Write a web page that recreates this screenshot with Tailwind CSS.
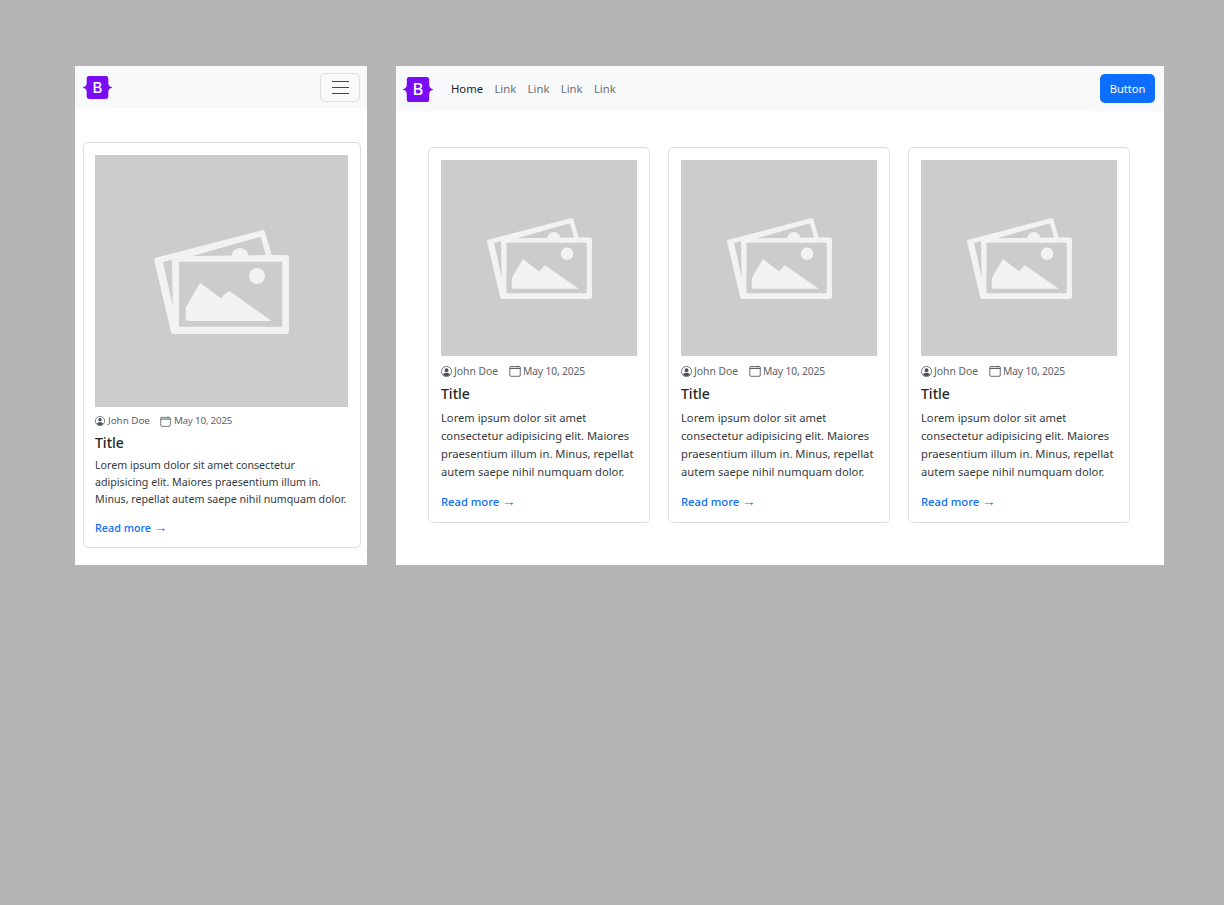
<!DOCTYPE html>
<html lang="en">
<head>
  <meta charset="UTF-8" />
  <title>Blog cards</title>
  <script src="https://cdn.jsdelivr.net/npm/@tailwindcss/browser@4"></script>
</head>
<body class="bg-[#b5b5b5] font-['Noto_Sans',sans-serif] text-[#212529]">
  <svg class="hidden">
    <symbol id="logo" viewBox="0 0 30 24" preserveAspectRatio="none">
      <path fill="#7a0cf5" d="M3.800 2.500A2.500 2.500 0 0 1 6.300 0h17.400a2.500 2.500 0 0 1 2.500 2.500V7.500c0 1.800 1 3.200 2.400 3.700.7.200 1.400.400 1.400.8s-.7.600-1.400.8c-1.400.5-2.400 1.900-2.400 3.700v5a2.500 2.500 0 0 1-2.500 2.500H6.300a2.500 2.500 0 0 1-2.500-2.500v-5c0-1.800-1-3.200-2.400-3.700C.7 12.600 0 12.400 0 12s.7-.6 1.400-.8c1.400-.5 2.400-1.900 2.400-3.700z"/>
    </symbol>
    <symbol id="pics" viewBox="0 0 135 104">
      <path fill="#f2f2f2" d="M1.800 27.800 108 .3c1.500-.4 2.500.2 3 1.700l6.700 23H132c2 0 3 1 3 3v73c0 2-1 3-3 3H20c-1.500 0-2.500-.7-3-2.200L.2 30.500c-.3-1.300.3-2.300 1.600-2.700z"/>
      <path fill="#cccccc" d="M9 32 18 29.700 18.800 76z M38.300 26 106.700 6.700 111.700 25z"/>
      <circle fill="#f2f2f2" cx="86" cy="26.500" r="8.500"/>
      <rect fill="#cccccc" x="25" y="31.700" width="103.300" height="65" rx="1"/>
      <circle fill="#f2f2f2" cx="103" cy="46" r="8"/>
      <path fill="#f2f2f2" d="M31.700 79c0-1.200.3-2 1-3.200L45 54.500c.6-1.200 1.500-1.400 2.700-.5L66.700 68.300 73.500 61.800c.8-.8 1.700-.9 2.700-.2L117.700 91H35c-2.200 0-3.300-1.100-3.300-3.300z"/>
    </symbol>
    <symbol id="user" viewBox="0 0 16 16">
      <circle cx="8" cy="8" r="7.400" fill="none" stroke="#495057" stroke-width="1.100"/>
      <circle cx="8" cy="6" r="2.800" fill="#495057"/>
      <path fill="#495057" d="M3 12.300C4 10.500 6 9.800 8 9.800s4 .7 5 2.500A6.500 6.500 0 0 1 8 15a6.500 6.500 0 0 1-5-2.700z"/>
    </symbol>
    <symbol id="cal" viewBox="0 0 16 16">
      <rect x="1" y="2" width="14" height="13" rx="1.500" fill="none" stroke="#495057" stroke-width="1.100"/>
      <path stroke="#495057" stroke-width="1.400" d="M1 4.500h14"/>
      <path stroke="#495057" stroke-width="1.100" d="M11.500 1v2"/>
    </symbol>
  </svg>

  <div class="flex items-start pt-[66px] pl-[75px] gap-[29px]">

    <!-- mobile -->
    <div class="w-[292px] h-[499px] bg-white shrink-0">
      <nav class="h-[42px] bg-[#f8f9fa] flex items-center justify-between pl-2 pr-[7px]">
        <span class="relative block w-[29px] h-[23px]">
          <svg class="w-[29px] h-[23px]"><use href="#logo"/></svg>
          <span class="absolute inset-0 flex items-center justify-center text-white text-[15px] leading-none font-medium font-['Inter',sans-serif]">B</span>
        </span>
        <button class="w-[40px] h-[29px] rounded-[5px] border border-[#dddfe1] flex flex-col items-center justify-center gap-[5px]">
          <span class="block w-[17px] h-px bg-[#40464c]"></span>
          <span class="block w-[17px] h-px bg-[#40464c]"></span>
          <span class="block w-[17px] h-px bg-[#40464c]"></span>
        </button>
      </nav>
      <div class="pt-[34px] pl-2 pr-[6px]">
        <article class="h-[406px] border border-[#dcdee0] rounded-[5px] px-[11px] pt-3">
          <div class="h-[252px] w-[253px] bg-[#cccccc] flex items-center justify-center">
            <svg class="w-[135px] h-[104px] mt-[2px]"><use href="#pics"/></svg>
          </div>
          <div class="flex items-center mt-[7px] h-[14px] text-[9.800px] text-[#5c636a] leading-none">
            <svg class="w-[10px] h-[10px] mr-[3px]"><use href="#user"/></svg>John Doe
            <svg class="w-[11px] h-[11px] ml-[10px] mr-[3px]"><use href="#cal"/></svg><span class="tracking-[-0.2px]">May 10, 2025</span>
          </div>
          <h3 class="text-[14px] leading-[17px] font-medium mt-[6px]">Title</h3>
          <p class="text-[10.650px] leading-[17px] mt-[6px] text-[#343a40]">Lorem ipsum dolor sit amet consectetur adipisicing elit. Maiores praesentium illum in. Minus, repellat autem saepe nihil numquam dolor.</p>
          <a class="block mt-[11px] text-[10.800px] leading-[17px] font-medium text-[#0d6efd]">Read more <span class="text-[13px] leading-none font-['Liberation_Sans',sans-serif]">→</span></a>
        </article>
      </div>
    </div>

    <!-- desktop -->
    <div class="w-[768px] h-[499px] bg-white shrink-0">
      <nav class="h-[45px] bg-[#f8f9fa] flex items-center pl-[7px] pr-[9px]">
        <span class="relative block w-[30px] h-[25px] mt-px">
          <svg class="w-[30px] h-[25px]"><use href="#logo"/></svg>
          <span class="absolute inset-0 flex items-center justify-center text-white text-[16px] leading-none font-medium font-['Inter',sans-serif]">B</span>
        </span>
        <div class="flex gap-[11.300px] ml-[18px] mt-px text-[11.300px] text-[#6c7074]">
          <a class="text-[#212529]">Home</a>
          <a>Link</a>
          <a>Link</a>
          <a>Link</a>
          <a>Link</a>
        </div>
        <button class="ml-auto w-[55px] h-[29px] pt-px rounded-[5px] bg-[#0d6efd] text-white text-[11.100px]">Button</button>
      </nav>
      <div class="grid grid-cols-3 gap-[18px] pt-[36px] pl-[32px] pr-[34px]">
        <article class="h-[376px] border border-[#dcdee0] rounded-[5px] px-3 pt-3">
          <div class="h-[196px] bg-[#cccccc] flex items-center justify-center">
            <svg class="w-[105px] h-[81px]"><use href="#pics"/></svg>
          </div>
          <div class="flex items-center mt-[8px] h-[14px] text-[10.300px] text-[#5c636a] leading-none">
            <svg class="w-[11px] h-[11px] mr-[2px]"><use href="#user"/></svg>John Doe
            <svg class="w-[12px] h-[12px] ml-[11px] mr-[2px]"><use href="#cal"/></svg><span class="tracking-[-0.15px]">May 10, 2025</span>
          </div>
          <h3 class="text-[14px] leading-[17px] font-medium mt-[7px]">Title</h3>
          <p class="text-[11.200px] leading-[18px] mt-[7px] text-[#343a40]">Lorem ipsum dolor sit amet consectetur adipisicing elit. Maiores praesentium illum in. Minus, repellat autem saepe nihil numquam dolor.</p>
          <a class="block mt-[12px] text-[11.200px] leading-[18px] font-medium text-[#0d6efd]">Read more <span class="text-[13.500px] leading-none font-['Liberation_Sans',sans-serif]">→</span></a>
        </article>
        <article class="h-[376px] border border-[#dcdee0] rounded-[5px] px-3 pt-3">
          <div class="h-[196px] bg-[#cccccc] flex items-center justify-center">
            <svg class="w-[105px] h-[81px]"><use href="#pics"/></svg>
          </div>
          <div class="flex items-center mt-[8px] h-[14px] text-[10.300px] text-[#5c636a] leading-none">
            <svg class="w-[11px] h-[11px] mr-[2px]"><use href="#user"/></svg>John Doe
            <svg class="w-[12px] h-[12px] ml-[11px] mr-[2px]"><use href="#cal"/></svg><span class="tracking-[-0.15px]">May 10, 2025</span>
          </div>
          <h3 class="text-[14px] leading-[17px] font-medium mt-[7px]">Title</h3>
          <p class="text-[11.200px] leading-[18px] mt-[7px] text-[#343a40]">Lorem ipsum dolor sit amet consectetur adipisicing elit. Maiores praesentium illum in. Minus, repellat autem saepe nihil numquam dolor.</p>
          <a class="block mt-[12px] text-[11.200px] leading-[18px] font-medium text-[#0d6efd]">Read more <span class="text-[13.500px] leading-none font-['Liberation_Sans',sans-serif]">→</span></a>
        </article>
        <article class="h-[376px] border border-[#dcdee0] rounded-[5px] px-3 pt-3">
          <div class="h-[196px] bg-[#cccccc] flex items-center justify-center">
            <svg class="w-[105px] h-[81px]"><use href="#pics"/></svg>
          </div>
          <div class="flex items-center mt-[8px] h-[14px] text-[10.300px] text-[#5c636a] leading-none">
            <svg class="w-[11px] h-[11px] mr-[2px]"><use href="#user"/></svg>John Doe
            <svg class="w-[12px] h-[12px] ml-[11px] mr-[2px]"><use href="#cal"/></svg><span class="tracking-[-0.15px]">May 10, 2025</span>
          </div>
          <h3 class="text-[14px] leading-[17px] font-medium mt-[7px]">Title</h3>
          <p class="text-[11.200px] leading-[18px] mt-[7px] text-[#343a40]">Lorem ipsum dolor sit amet consectetur adipisicing elit. Maiores praesentium illum in. Minus, repellat autem saepe nihil numquam dolor.</p>
          <a class="block mt-[12px] text-[11.200px] leading-[18px] font-medium text-[#0d6efd]">Read more <span class="text-[13.500px] leading-none font-['Liberation_Sans',sans-serif]">→</span></a>
        </article>
      </div>
    </div>
  </div>
</body>
</html>
